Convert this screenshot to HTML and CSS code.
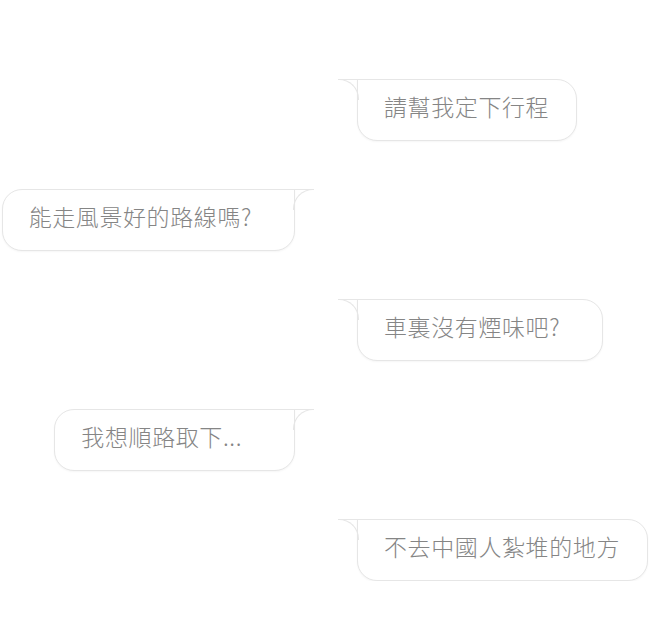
FILE: index.html
```html
<!DOCTYPE html>
<html lang="zh-Hant">
<head>
<meta charset="utf-8">
<title>Chat</title>
<link rel="stylesheet" href="styles.css">
</head>
<body>
<main class="chat">
  <div class="bubble me">請幫我定下行程</div>
  <div class="bubble them q">能走風景好的路線嗎?</div>
  <div class="bubble me q">車裏沒有煙味吧?</div>
  <div class="bubble them dots">我想順路取下...</div>
  <div class="bubble me">不去中國人紮堆的地方</div>
</main>
</body>
</html>
```
FILE: styles.css
```css
html, body {
  margin: 0;
  background: #ffffff;
}

.chat {
  display: flex;
  flex-direction: column;
  gap: 48px;
  padding-top: 79px;
  font-family: "Noto Sans CJK TC", "Noto Sans", sans-serif;
}

.bubble {
  position: relative;
  box-sizing: border-box;
  height: 62px;
  line-height: 53px;
  padding: 0 27px 0 26px;
  font-size: 23px;
  font-weight: 300;
  letter-spacing: 0.6px;
  color: #858585;
  background: #ffffff;
  border: 1px solid #e6e6e6;
  box-shadow: 0 1px 2px rgba(0, 0, 0, 0.04);
  white-space: nowrap;
}

.q {
  padding-right: 42px;
}

.dots {
  padding-right: 52px;
}

.me {
  align-self: flex-start;
  margin-left: 357px;
  border-radius: 0 20px 20px 20px;
}

.them {
  align-self: flex-end;
  margin-right: 357px;
  border-radius: 20px 0 20px 20px;
}

.bubble::before,
.bubble::after {
  content: "";
  position: absolute;
  top: -1px;
  box-sizing: border-box;
  border-color: #e6e6e6;
  border-style: solid;
  border-width: 0;
}

.bubble::before {
  width: 21px;
  height: 1px;
  border-top-width: 1px;
}

.bubble::after {
  width: 21px;
  height: 21px;
  border-top-width: 1px;
}

.me::before,
.me::after {
  left: -20px;
}

.me::after {
  border-right-width: 1px;
  border-top-right-radius: 20px;
}

.them::before,
.them::after {
  right: -20px;
}

.them::after {
  border-left-width: 1px;
  border-top-left-radius: 20px;
}
```
